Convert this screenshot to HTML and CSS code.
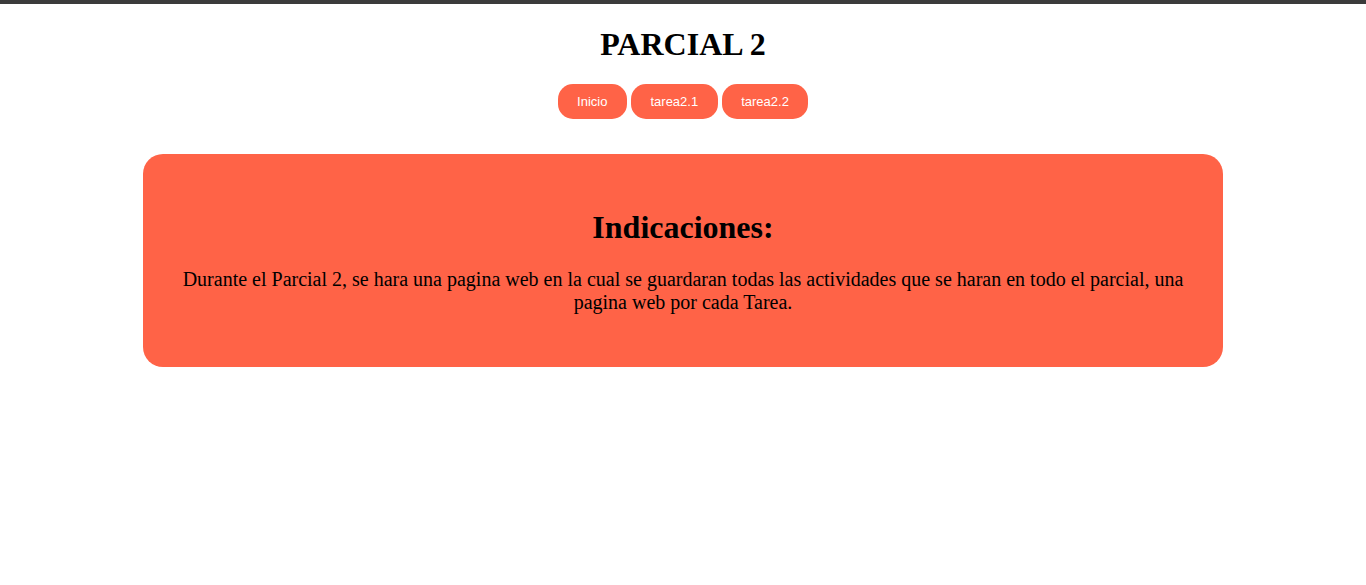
FILE: index.html
```html
<!DOCTYPE html>
<html lang="es">
<head>
<meta charset="utf-8">
<title>Parcial 2</title>
<link rel="stylesheet" href="styles.css">
</head>
<body>
<header class="header">
  <h1 class="title">PARCIAL 2</h1>
  <nav class="nav">
    <a class="btn" href="#">Inicio</a>
    <a class="btn" href="#">tarea2.1</a>
    <a class="btn" href="#">tarea2.2</a>
  </nav>
</header>
<main class="card">
  <h2 class="card-title">Indicaciones:</h2>
  <p class="card-text">Durante el Parcial 2, se hara una pagina web en la cual se guardaran todas las actividades que se haran en todo el parcial, una pagina web por cada Tarea.</p>
</main>
</body>
</html>
```

FILE: styles.css
```css
html, body {
  margin: 0;
  padding: 0;
  background: #fff;
}
body {
  border-top: 4px solid #3b3b3b;
  font-family: "Liberation Serif", "Times New Roman", serif;
  color: #000;
}
.header {
  text-align: center;
  padding-top: 1px;
}
.title {
  font-size: 32px;
  font-weight: bold;
  margin: 21px 0 21px;
}
.nav {
  display: flex;
  justify-content: center;
  gap: 4px;
}
.btn {
  display: inline-block;
  background: #ff6347;
  color: #fff;
  font-family: "Liberation Sans", Arial, sans-serif;
  font-size: 13px;
  line-height: 15px;
  padding: 10px 19.5px;
  border-radius: 15px;
  text-decoration: none;
}
.card {
  display: block;
  width: 1040px;
  margin: 35px auto 0;
  background: #ff6347;
  border-radius: 20px;
  padding: 32px 20px;
  text-align: center;
}
.card-title {
  font-size: 32px;
  line-height: 36px;
  font-weight: bold;
  margin: 23px 0 23px;
}
.card-text {
  font-size: 20px;
  line-height: 23px;
  margin: 0 0 21px;
}
```
